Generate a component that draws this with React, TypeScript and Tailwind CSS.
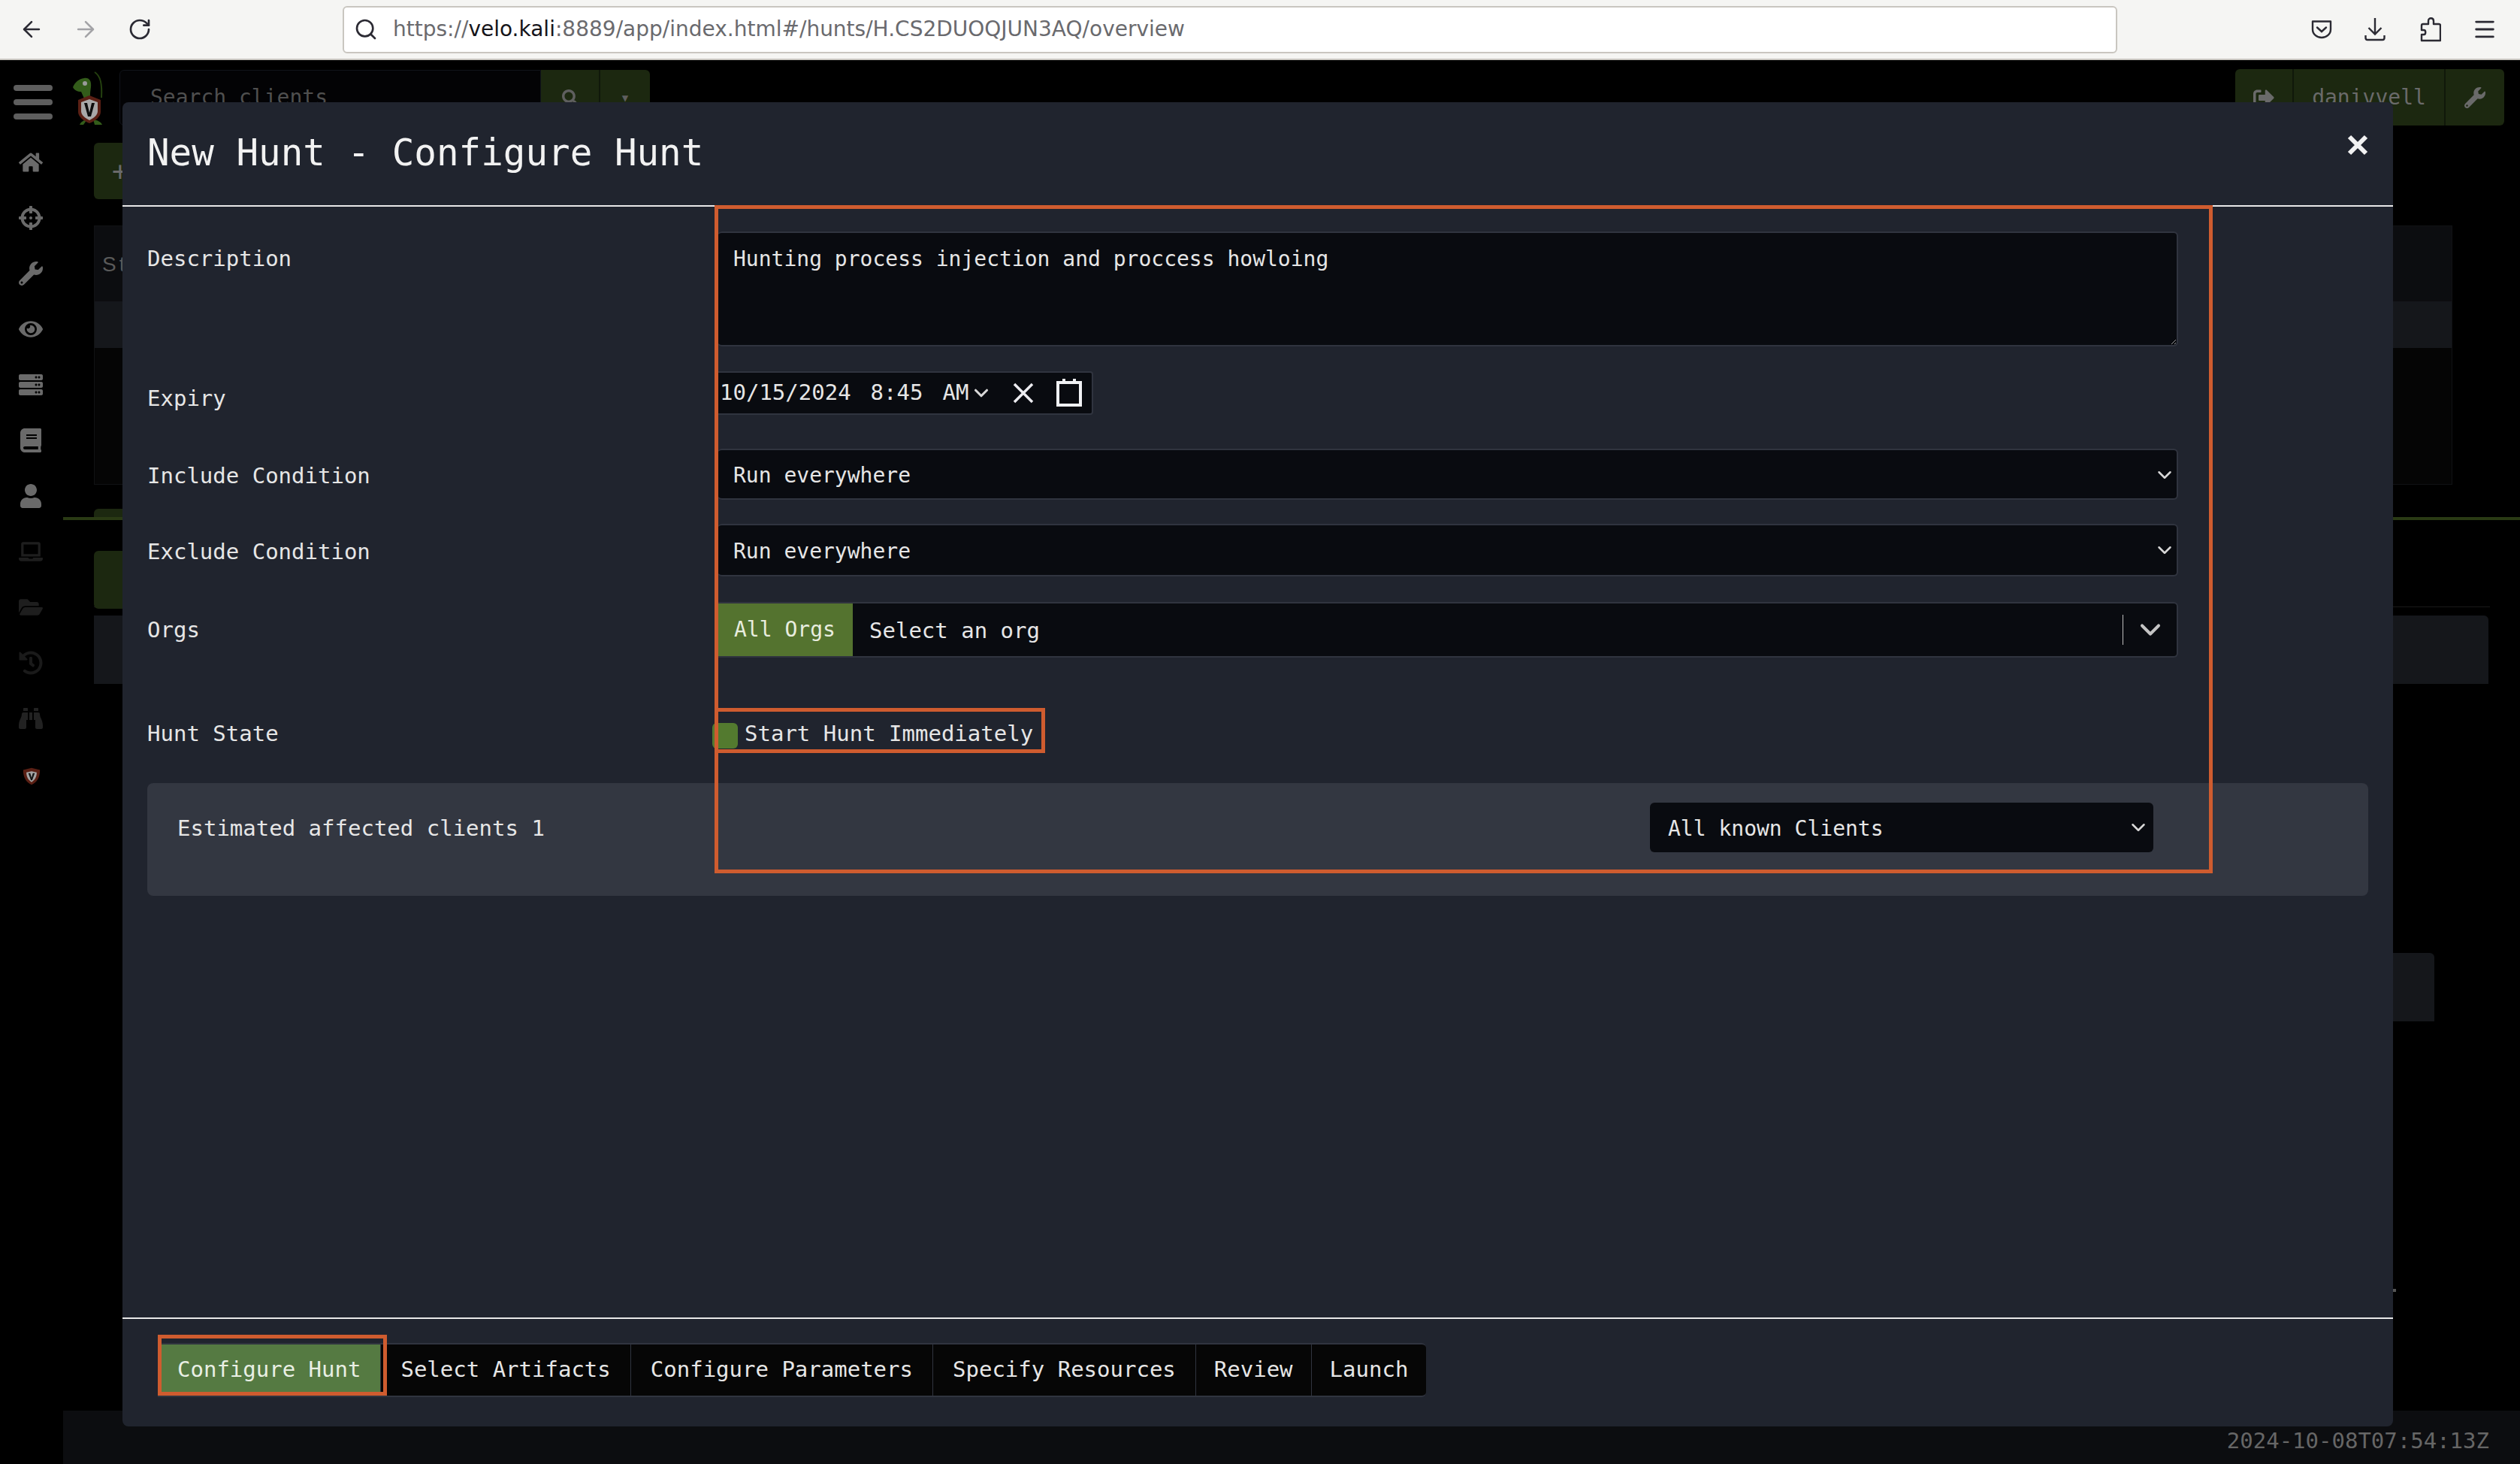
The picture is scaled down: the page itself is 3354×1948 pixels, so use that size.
import React from 'react';
import { ArrowLeft, ArrowRight, ChevronDown, Menu, RotateCw, Search } from 'lucide-react';
import {
  FaBinoculars,
  FaBook,
  FaCrosshairs,
  FaEye,
  FaFolderOpen,
  FaHistory,
  FaHome,
  FaLaptop,
  FaSearch,
  FaServer,
  FaSignOutAlt,
  FaUser,
  FaWrench,
} from 'react-icons/fa';

const tabs = [
  { label: 'Configure Hunt', cls: 'px-[26px] bg-[#557a42] text-[#e9efe4]' },
  { label: 'Select Artifacts', cls: 'px-[26px]' },
  { label: 'Configure Parameters', cls: 'px-[26px]' },
  { label: 'Specify Resources', cls: 'px-[26px]' },
  { label: 'Review', cls: 'px-[24px]' },
  { label: 'Launch', cls: 'px-[24px]' },
];

const PocketIcon = () => (
  <svg width="28" height="26" viewBox="0 0 28 26" fill="none" stroke="#2b2a33" strokeWidth="2.4">
    <path d="M2 2.5h24v10.5c0 6.5-5.5 11-12 11S2 19.500 2 13z" strokeLinejoin="round" />
    <path d="M8 10.500l6 5.500 6-5.500" strokeLinecap="round" />
  </svg>
);

const DownloadIcon = () => (
  <svg width="28" height="32" viewBox="0 0 28 32" fill="none" stroke="#2b2a33" strokeWidth="2.4">
    <path d="M14 1v21M5.500 14l8.500 8.500 8.500-8.500" />
    <path d="M1.500 24v3.500c0 1.500 1 2.500 2.500 2.500h20c1.500 0 2.500-1 2.500-2.500V24" />
  </svg>
);

const PuzzleIcon = () => (
  <svg width="28" height="34" viewBox="0 0 28 34" fill="none" stroke="#2b2a33" strokeWidth="2.4" strokeLinejoin="round">
    <path d="M2 32V24h3c3 0 3-6 0-6H2v-6c0-1 1-2 2-2h7V6c0-5 7-5 7 0v4h7c1 0 2 1 2 2v20z" />
  </svg>
);

const VeloLogo = () => (
  <svg width="46" height="72" viewBox="0 0 46 72">
    <path d="M30 2c8 5 10 16 9 34" fill="none" stroke="#24400f" strokeWidth="2" />
    <path d="M1 22c3-7 8-11 15-12 7-1 10 4 9 12-1 7-1 9-1 12l-8 3-4-9C7 28 3 26 1 22z" fill="#335c1a" />
    <circle cx="17" cy="17" r="3" fill="#9a9a9a" />
    <path d="M10 72c2-4 5-6 10-7l-5 7zM28 65c6 1 10 3 12 7H30z" fill="#335c1a" />
    <path d="M8 39l15-6 15 6v16c0 6-7 12-15 15C15 67 8 61 8 55z" fill="#5a1f14" />
    <path d="M12 42l11-4 11 4v12c0 5-5 9-11 12-6-3-11-7-11-12z" fill="#a8a8a8" />
    <path d="M16 43h4l3 13 3-13h4l-5 18h-4z" fill="#0d0d0d" />
  </svg>
);

const VeloShield = () => (
  <svg width="24" height="24" viewBox="0 0 28 28">
    <path d="M1 4l13-3 13 3c0 11-4 19-13 23C5 23 1 15 1 4z" fill="#5a1f14" />
    <path d="M6 8l8-2 8 2c0 7-3 12-8 15-5-3-8-8-8-15z" fill="#a5a5a5" />
    <path d="M9 9h3l2 7 2-7h3l-4 11h-2z" fill="#151515" />
  </svg>
);

const sideIcons = [
  { icon: FaHome, cls: 'text-[#6a6a6a]' },
  { icon: FaCrosshairs, cls: 'text-[#6a6a6a]' },
  { icon: FaWrench, cls: 'text-[#6a6a6a]' },
  { icon: FaEye, cls: 'text-[#6a6a6a]' },
  { icon: FaServer, cls: 'text-[#6a6a6a]' },
  { icon: FaBook, cls: 'text-[#6a6a6a]' },
  { icon: FaUser, cls: 'text-[#6a6a6a]' },
  { icon: FaLaptop, cls: 'text-[#1e1e1e]' },
  { icon: FaFolderOpen, cls: 'text-[#1e1e1e]' },
  { icon: FaHistory, cls: 'text-[#1a1a1a]' },
  { icon: FaBinoculars, cls: 'text-[#222222]' },
];

const BrowserBar = () => (
  <div className="h-[80px] shrink-0 flex items-center bg-[#f5f5f3] border-b-2 border-[#c9c6c0]">
    <ArrowLeft size={34} strokeWidth={1.8} className="ml-[25px] text-[#2b2a33]" />
    <ArrowRight size={34} strokeWidth={1.8} className="ml-[38px] text-[#a3a3a6]" />
    <RotateCw size={32} strokeWidth={2} className="ml-[39px] text-[#2b2a33]" />
    <div className="ml-[254px] w-[2362px] h-[63px] flex items-center bg-white border-2 border-[#c9c6c0] rounded-md">
      <Search size={32} strokeWidth={2} className="ml-[13px] text-[#2b2a33]" />
      <span className="ml-[20px] font-['DejaVu_Sans',sans-serif] text-[28px] text-[#6a6a6e] whitespace-nowrap">
        https://<span className="text-[#15141a]">velo.kali</span>:8889/app/index.html#/hunts/H.CS2DUOQJUN3AQ/overview
      </span>
    </div>
    <div className="ml-[258px] flex items-center">
      <PocketIcon />
      <div className="ml-[43px]"><DownloadIcon /></div>
      <div className="ml-[46px]"><PuzzleIcon /></div>
      <Menu size={34} strokeWidth={2} className="ml-[41px] text-[#2b2a33]" />
    </div>
  </div>
);

const Background = () => (
  <div className="h-full flex flex-col bg-black">
    <header className="h-[110px] shrink-0 flex items-start">
      <div className="ml-[18px] mt-[33px] w-[52px] flex flex-col gap-[11px]">
        <div className="h-[8px] rounded-full bg-[#5e5e5e]" />
        <div className="h-[8px] rounded-full bg-[#5e5e5e]" />
        <div className="h-[8px] rounded-full bg-[#5e5e5e]" />
      </div>
      <div className="ml-[26px] mt-[14px]"><VeloLogo /></div>
      <div className="ml-[17px] mt-[13px] w-[561px] h-[74px] pl-[40px] flex items-center bg-[#030305] border border-[#10131a] rounded-l-md text-[#4f4f4f] text-[28px]">
        Search clients
      </div>
      <div className="mt-[13px] w-[145px] h-[74px] flex bg-[#1c2810] rounded-r-md text-[#5f5f5f]">
        <div className="w-[79px] flex items-center justify-center border-r-2 border-[#10180a]">
          <FaSearch size={22} />
        </div>
        <div className="flex-1 flex items-center justify-center text-[14px]">▼</div>
      </div>
      <div className="ml-auto mr-[21px] mt-[12px] w-[358px] h-[75px] flex bg-[#1c2810] rounded-md text-[#6a6a6a]">
        <div className="w-[78px] flex items-center justify-center border-r-2 border-[#10180a]">
          <FaSignOutAlt size={28} />
        </div>
        <div className="flex-1 flex items-center justify-center border-r-2 border-[#10180a] text-[28px]">
          danivvell
        </div>
        <div className="w-[78px] flex items-center justify-center">
          <FaWrench size={28} />
        </div>
      </div>
    </header>
    <div className="flex-1 flex min-h-0">
      <aside className="w-[84px] shrink-0 pt-[10px] flex flex-col items-center gap-[42px]">
        {sideIcons.map(({ icon: Icon, cls }, i) => (
          <div key={i} className={`w-[32px] h-[32px] -translate-x-[1px] ${cls}`}>
            <Icon size={32} />
          </div>
        ))}
        <div className="mt-[7px]"><VeloShield /></div>
      </aside>
      <main className="flex-1 flex flex-col min-w-0">
        <div className="ml-[41px] w-[200px] h-[75px] pl-[24px] flex items-center bg-[#1c2810] rounded-md text-[#6a6a6a] text-[36px]">
          +
        </div>
        <div className="ml-[41px] mr-[90px] mt-[35px] h-[345px] flex flex-col bg-[#050505] border border-[#111214]">
          <div className="h-[100px] pl-[10px] pt-[30px] bg-[#0c0d10] font-['Liberation_Sans',sans-serif] text-[#5a5a5a] text-[28px] tracking-[4px]">
            State
          </div>
          <div className="h-[62px] bg-[#15171b]" />
        </div>
        <div className="h-[47px] flex flex-col justify-end border-b-4 border-[#2a3a14]">
          <div className="ml-[41px] w-[300px] h-[11px] bg-[#1c2810] rounded-t-md" />
        </div>
        <div className="ml-[41px] mr-[40px] mt-[41px] h-[75px] border-b border-[#1a1a1a]">
          <div className="w-[200px] h-[77px] bg-[#1c2810] rounded-md" />
        </div>
        <div className="ml-[41px] mr-[42px] mt-[11px] h-[91px] bg-[#15171b] rounded-tr-md" />
        <div className="ml-[300px] mr-[114px] mt-[358px] h-[91px] bg-[#15171b] rounded-tr-md" />
        <footer className="mt-auto h-[71px] shrink-0 flex items-center justify-end pt-[10px] pr-[41px] bg-[#0c0d10] text-[#666666] text-[29px]">
          2024-10-08T07:54:13Z
        </footer>
      </main>
    </div>
  </div>
);

const Row = ({ label, labelClass = '', className = '', children }: { label: string; labelClass?: string; className?: string; children: React.ReactNode }) => (
  <div className={`flex ${className}`}>
    <label className={`w-[759px] shrink-0 text-[29px] leading-[42px] ${labelClass}`}>{label}</label>
    {children}
  </div>
);

const SelectField = ({ value, className }: { value: string; className: string }) => (
  <div className={`relative ${className}`}>
    <select
      defaultValue={value}
      className="w-full h-full appearance-none pl-[21px] pt-[4px] bg-[#090b10] border-y-2 border-r-2 border-[#30343f] rounded-md text-[28px] text-[#e6e6e6] outline-none"
    >
      <option>{value}</option>
    </select>
    <ChevronDown size={30} strokeWidth={2} className="absolute right-[3px] top-[20px] text-[#d8d8d8] pointer-events-none" />
  </div>
);

const Modal = () => (
  <div className="absolute left-[163px] top-[56px] w-[3022px] h-[1762px] flex flex-col bg-[#20242e] rounded-lg text-[#e6e6e6]">
    <div className="h-[139px] shrink-0 flex items-center justify-between pl-[33px] pr-[33px] border-b-2 border-[#e8e8e8]">
      <h1 className="text-[49.200px] leading-none text-[#f2f2f2] -mt-[1px]">New Hunt - Configure Hunt</h1>
      <svg width="28" height="28" viewBox="0 0 28 28" className="-mt-[24px]" stroke="#f2f2f2" strokeWidth="6">
        <path d="M3 3l22 22M25 3L3 25" />
      </svg>
    </div>

    <div className="flex-1 px-[33px] pt-[33px] min-h-0">
      <Row label="Description" labelClass="pt-[15px]">
        <textarea
          readOnly
          defaultValue="Hunting process injection and proccess howloing"
          className="w-[1944px] h-[153px] py-[14px] pl-[21px] bg-[#090b10] border-y-2 border-r-2 border-[#30343f] rounded-md text-[28px] leading-[42px] text-[#e6e6e6] outline-none [color-scheme:dark]"
        />
      </Row>

      <Row label="Expiry" labelClass="self-center pt-[13px]" className="mt-[33px]">
        <div className="w-[500px] h-[58px] flex items-center bg-[#090b10] border-y-2 border-r-2 border-[#30343f] rounded-r-sm text-[29px] text-[#e6e6e6]">
          <span className="ml-[3px]">10/15/2024</span>
          <span className="ml-[26px]">8:45</span>
          <span className="ml-[26px]">AM</span>
          <ChevronDown size={30} strokeWidth={2.5} className="ml-[2px] text-[#d8d8d8]" />
          <svg width="28" height="28" viewBox="0 0 28 28" className="ml-[27px]" stroke="#ececf0" strokeWidth="3.500">
            <path d="M2 2l24 24M26 2L2 26" />
          </svg>
          <svg width="34" height="38" viewBox="0 0 34 38" className="ml-[30px] -mt-[2px]" fill="none" stroke="#f0f1f4" strokeWidth="4">
            <path d="M2 6h30v30H2z" />
            <path d="M10 1v6M24 1v6" />
          </svg>
        </div>
      </Row>

      <Row label="Include Condition" labelClass="self-center pt-[4px]" className="mt-[45px]">
        <SelectField value="Run everywhere" className="w-[1944px] h-[68px]" />
      </Row>

      <Row label="Exclude Condition" labelClass="self-center pt-[4px]" className="mt-[32px]">
        <SelectField value="Run everywhere" className="w-[1944px] h-[70px]" />
      </Row>

      <Row label="Orgs" labelClass="self-center" className="mt-[34px]">
        <div className="w-[1944px] h-[74px] flex">
          <div className="w-[180px] flex items-center pl-[22px] bg-[#54732f] border-y-2 border-[#30343f] text-[28px] text-[#e8eddf]">
            All Orgs
          </div>
          <div className="flex-1 flex items-center pl-[22px] bg-[#090b10] border-y-2 border-r-2 border-[#30343f] rounded-r-md text-[29px] text-[#e6e6e6]">
            <span className="pt-[4px]">Select an org</span>
            <div className="ml-auto w-[1px] h-[40px] bg-[#bdbdbd]" />
            <ChevronDown size={44} strokeWidth={2.2} className="ml-[14px] mr-[13px] text-[#c4c4c4]" />
          </div>
        </div>
      </Row>

      <Row label="Hunt State" labelClass="self-center pt-[2px]" className="mt-[80px] h-[40px]">
        <div className="-ml-[7px] flex items-center gap-[9px]">
          <input type="checkbox" readOnly className="w-[34px] h-[34px] mt-[8px] appearance-none bg-[#537a2f] rounded-md" />
          <span className="pt-[2px] text-[29px] leading-[40px] text-[#e6e6e6]">Start Hunt Immediately</span>
        </div>
      </Row>

      <div className="mt-[47px] h-[150px] pl-[40px] pr-[286px] pt-[26px] bg-[#333741] rounded-lg">
        <div className="flex items-center justify-between h-[66px]">
          <span className="pt-[4px] text-[29px]">Estimated affected clients 1</span>
          <div className="relative w-[670px] h-[66px]">
            <select
              defaultValue="All known Clients"
              className="w-full h-full appearance-none pl-[24px] pt-[4px] bg-[#090b10] rounded-md text-[28px] text-[#e6e6e6] outline-none"
            >
              <option>All known Clients</option>
            </select>
            <ChevronDown size={30} strokeWidth={2} className="absolute right-[5px] top-[18px] text-[#d8d8d8] pointer-events-none" />
          </div>
        </div>
      </div>
    </div>

    <div className="h-[145px] shrink-0 pt-[32px] pl-[47px] border-t-2 border-[#e8e8e8]">
      <div className="inline-flex h-[72px] bg-[#060606] border-y-2 border-[#30343f] rounded-r-md text-[29px] text-[#e6e6e6]">
        {tabs.map((t) => (
          <div key={t.label} className={`flex items-center border-r border-[#30343f] last:border-r-0 ${t.cls}`}>
            {t.label}
          </div>
        ))}
      </div>
    </div>

    {/* orange annotation boxes */}
    <div className="absolute left-[788px] top-[137px] w-[1994px] h-[889px] border-[5px] border-[#cf5c2f] pointer-events-none" />
    <div className="absolute left-[788px] top-[806px] w-[440px] h-[60px] border-[5px] border-[#cf5c2f] pointer-events-none" />
    <div className="absolute left-[47px] top-[1640px] w-[305px] h-[81px] border-[5px] border-[#cf5c2f] pointer-events-none" />
  </div>
);

export default function App() {
  return (
    <div className="w-[3354px] h-[1948px] flex flex-col overflow-hidden font-['DejaVu_Sans_Mono',monospace]">
      <BrowserBar />
      <div className="relative flex-1 min-h-0">
        <Background />
        <Modal />
        <div className="absolute left-[3185px] top-[1635px] w-[4px] h-[4px] bg-[#555555]" />
      </div>
    </div>
  );
}
